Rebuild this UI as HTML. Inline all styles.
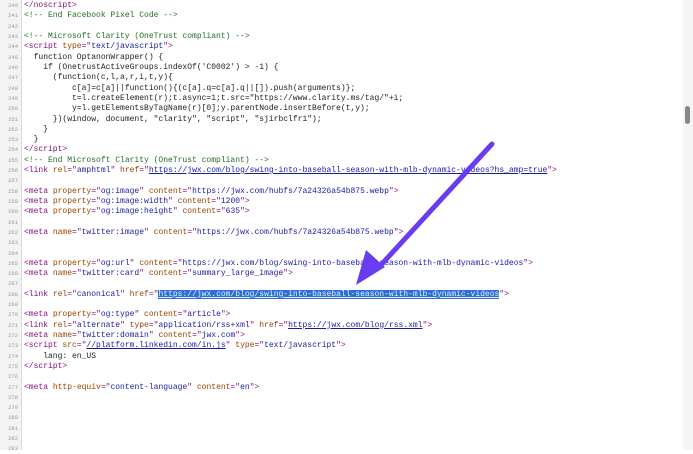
<!DOCTYPE html>
<html><head><style>
body{margin:0;width:693px;height:450px;overflow:hidden;background:#fff;position:relative;font-family:"Liberation Mono",monospace;}
.g{position:absolute;left:0;top:0;width:21px;height:450px;background:#f3f3f3;border-right:1px solid #ddd;}
.l{position:absolute;left:0;height:10px;line-height:10px;white-space:pre;font-size:8px;color:#222;}
.n{display:inline-block;width:18px;text-align:right;font-size:5.5px;color:#999;margin-right:6px;vertical-align:top;}
.t{color:#881280}.a{color:#994500}.v{color:#1a1aa6}.c{color:#236e25}
.u{color:#1a1aa6;text-decoration:underline}
.h{background:#2a6fd6;color:#e8eeff;text-decoration:underline}
</style></head><body>
<div class="g"></div>
<div style="position:absolute;left:683px;top:0;width:10px;height:450px;background:#f5f5f5"></div>
<div style="position:absolute;left:685px;top:106px;width:5px;height:18px;background:#888;border-radius:3px"></div>
<div class="l" style="top:1px"><span class="n">240</span><span class="t">&lt;/noscript&gt;</span></div>
<div class="l" style="top:11.3px"><span class="n">241</span><span class="c">&lt;!-- End Facebook Pixel Code --&gt;</span></div>
<div class="l" style="top:21.6px"><span class="n">242</span></div>
<div class="l" style="top:32px"><span class="n">243</span><span class="c">&lt;!-- Microsoft Clarity (OneTrust compliant) --&gt;</span></div>
<div class="l" style="top:42.3px"><span class="n">244</span><span class="t">&lt;script </span><span class="a">type</span><span class="t">="</span><span class="v">text/javascript</span><span class="t">"&gt;</span></div>
<div class="l" style="top:52.6px"><span class="n">245</span>  function OptanonWrapper() {</div>
<div class="l" style="top:62.9px"><span class="n">246</span>    if (OnetrustActiveGroups.indexOf('C0002') &gt; -1) {</div>
<div class="l" style="top:73.2px"><span class="n">247</span>      (function(c,l,a,r,i,t,y){</div>
<div class="l" style="top:83.5px"><span class="n">248</span>          c[a]=c[a]||function(){(c[a].q=c[a].q||[]).push(arguments)};</div>
<div class="l" style="top:93.8px"><span class="n">249</span>          t=l.createElement(r);t.async=1;t.src="https://www.clarity.ms/tag/"+i;</div>
<div class="l" style="top:104.2px"><span class="n">250</span>          y=l.getElementsByTagName(r)[0];y.parentNode.insertBefore(t,y);</div>
<div class="l" style="top:114.5px"><span class="n">251</span>      })(window, document, "clarity", "script", "sjirbclfr1");</div>
<div class="l" style="top:124.8px"><span class="n">252</span>    }</div>
<div class="l" style="top:135.1px"><span class="n">253</span>  }</div>
<div class="l" style="top:145.4px"><span class="n">254</span><span class="t">&lt;/script&gt;</span></div>
<div class="l" style="top:155.7px"><span class="n">255</span><span class="c">&lt;!-- End Microsoft Clarity (OneTrust compliant) --&gt;</span></div>
<div class="l" style="top:166px"><span class="n">256</span><span class="t">&lt;link </span><span class="a">rel</span><span class="t">="</span><span class="v">amphtml</span><span class="t">" </span><span class="a">href</span><span class="t">="</span><span class="u">https://jwx.com/blog/swing-into-baseball-season-with-mlb-dynamic-videos?hs_amp=true</span><span class="t">"&gt;</span></div>
<div class="l" style="top:176.3px"><span class="n">257</span></div>
<div class="l" style="top:186.6px"><span class="n">258</span><span class="t">&lt;meta </span><span class="a">property</span><span class="t">="</span><span class="v">og:image</span><span class="t">" </span><span class="a">content</span><span class="t">="</span><span class="v">https://jwx.com/hubfs/7a24326a54b875.webp</span><span class="t">"&gt;</span></div>
<div class="l" style="top:196.9px"><span class="n">259</span><span class="t">&lt;meta </span><span class="a">property</span><span class="t">="</span><span class="v">og:image:width</span><span class="t">" </span><span class="a">content</span><span class="t">="</span><span class="v">1200</span><span class="t">"&gt;</span></div>
<div class="l" style="top:207.2px"><span class="n">260</span><span class="t">&lt;meta </span><span class="a">property</span><span class="t">="</span><span class="v">og:image:height</span><span class="t">" </span><span class="a">content</span><span class="t">="</span><span class="v">635</span><span class="t">"&gt;</span></div>
<div class="l" style="top:217.5px"><span class="n">261</span></div>
<div class="l" style="top:227.8px"><span class="n">262</span><span class="t">&lt;meta </span><span class="a">name</span><span class="t">="</span><span class="v">twitter:image</span><span class="t">" </span><span class="a">content</span><span class="t">="</span><span class="v">https://jwx.com/hubfs/7a24326a54b875.webp</span><span class="t">"&gt;</span></div>
<div class="l" style="top:238.2px"><span class="n">263</span></div>
<div class="l" style="top:248.5px"><span class="n">264</span></div>
<div class="l" style="top:258.8px"><span class="n">265</span><span class="t">&lt;meta </span><span class="a">property</span><span class="t">="</span><span class="v">og:url</span><span class="t">" </span><span class="a">content</span><span class="t">="</span><span class="v">https://jwx.com/blog/swing-into-baseball-season-with-mlb-dynamic-videos</span><span class="t">"&gt;</span></div>
<div class="l" style="top:269.1px"><span class="n">266</span><span class="t">&lt;meta </span><span class="a">name</span><span class="t">="</span><span class="v">twitter:card</span><span class="t">" </span><span class="a">content</span><span class="t">="</span><span class="v">summary_large_image</span><span class="t">"&gt;</span></div>
<div class="l" style="top:279.4px"><span class="n">267</span></div>
<div class="l" style="top:289.7px"><span class="n">268</span><span class="t">&lt;link </span><span class="a">rel</span><span class="t">="</span><span class="v">canonical</span><span class="t">" </span><span class="a">href</span><span class="t">="</span><span class="h">https://jwx.com/blog/swing-into-baseball-season-with-mlb-dynamic-videos</span><span class="t">"&gt;</span></div>
<div class="l" style="top:300px"><span class="n">269</span></div>
<div class="l" style="top:310.3px"><span class="n">270</span><span class="t">&lt;meta </span><span class="a">property</span><span class="t">="</span><span class="v">og:type</span><span class="t">" </span><span class="a">content</span><span class="t">="</span><span class="v">article</span><span class="t">"&gt;</span></div>
<div class="l" style="top:320.6px"><span class="n">271</span><span class="t">&lt;link </span><span class="a">rel</span><span class="t">="</span><span class="v">alternate</span><span class="t">" </span><span class="a">type</span><span class="t">="</span><span class="v">application/rss+xml</span><span class="t">" </span><span class="a">href</span><span class="t">="</span><span class="u">https://jwx.com/blog/rss.xml</span><span class="t">"&gt;</span></div>
<div class="l" style="top:331px"><span class="n">272</span><span class="t">&lt;meta </span><span class="a">name</span><span class="t">="</span><span class="v">twitter:domain</span><span class="t">" </span><span class="a">content</span><span class="t">="</span><span class="v">jwx.com</span><span class="t">"&gt;</span></div>
<div class="l" style="top:341.3px"><span class="n">273</span><span class="t">&lt;script </span><span class="a">src</span><span class="t">="</span><span class="u">//platform.linkedin.com/in.js</span><span class="t">" </span><span class="a">type</span><span class="t">="</span><span class="v">text/javascript</span><span class="t">"&gt;</span></div>
<div class="l" style="top:351.6px"><span class="n">274</span>    lang: en_US</div>
<div class="l" style="top:361.9px"><span class="n">275</span><span class="t">&lt;/script&gt;</span></div>
<div class="l" style="top:372.2px"><span class="n">276</span></div>
<div class="l" style="top:382.5px"><span class="n">277</span><span class="t">&lt;meta </span><span class="a">http-equiv</span><span class="t">="</span><span class="v">content-language</span><span class="t">" </span><span class="a">content</span><span class="t">="</span><span class="v">en</span><span class="t">"&gt;</span></div>
<div class="l" style="top:392.8px"><span class="n">278</span></div>
<div class="l" style="top:403.1px"><span class="n">279</span></div>
<div class="l" style="top:413.4px"><span class="n">280</span></div>
<div class="l" style="top:423.8px"><span class="n">281</span></div>
<div class="l" style="top:434.1px"><span class="n">282</span></div>
<div class="l" style="top:444.4px"><span class="n">283</span></div>
<svg style="position:absolute;left:0;top:0" width="693" height="450">
<line x1="492" y1="144" x2="380" y2="266" stroke="#6a3cf0" stroke-width="5" stroke-linecap="round"/>
<polygon points="356,285 366,250 385,267" fill="#6a3cf0"/>
</svg>
</body></html>
